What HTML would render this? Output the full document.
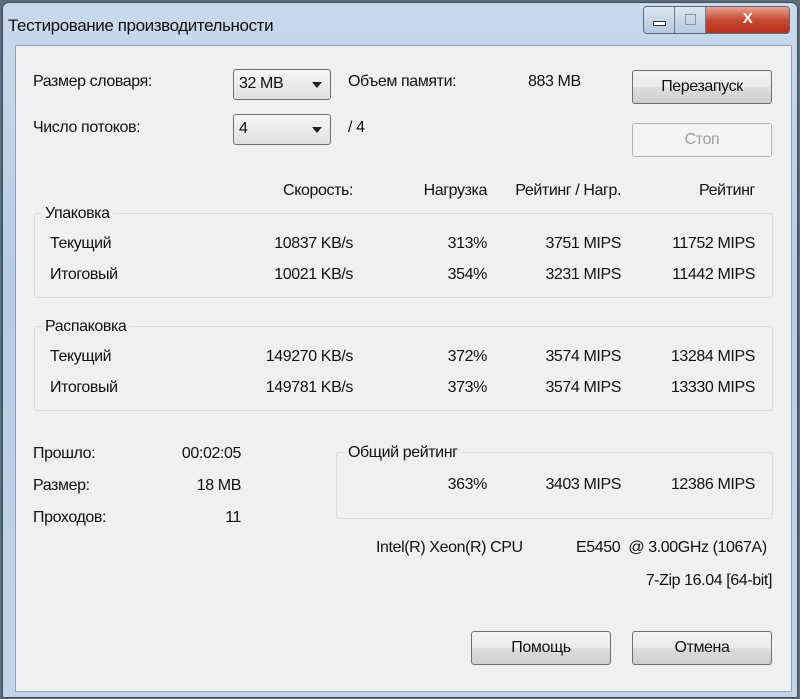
<!DOCTYPE html>
<html><head><meta charset="utf-8"><style>
body{margin:0;width:800px;height:699px;overflow:hidden;background:#5d6a78;font-family:"Liberation Sans",sans-serif;font-size:16px;letter-spacing:-0.4px;color:#111;position:relative}
.win{position:absolute;left:2px;top:2px;width:794px;height:694px;border:1px solid #3d4d5e;border-radius:7px 7px 2px 2px;background:linear-gradient(180deg,#c9daeb 0%,#b8cde3 40%,#c3d5e8 100%)}
.client{position:absolute;left:12px;top:42px;width:775px;height:645px;background:#f0f0f0;border:1px solid #8aa0b8}
.t{position:absolute;white-space:nowrap;line-height:20px}
.r{text-align:right}
.btn{position:absolute;border:1px solid #707070;border-radius:3px;background:linear-gradient(#f2f2f2 0%,#ebebeb 50%,#dddddd 51%,#cfcfcf 100%);text-align:center;line-height:31px;box-sizing:border-box}
.btn.dis{border-color:#adb2b5;background:#f4f4f4;color:#a0a0a0}
.combo{position:absolute;border:1px solid #707070;border-radius:3px;background:linear-gradient(#f6f6f6,#e0e0e0);box-sizing:border-box;line-height:28px;padding-left:5px}
.combo:after{content:"";position:absolute;right:8px;top:12px;border-left:5px solid transparent;border-right:5px solid transparent;border-top:6px solid #222}
.grp{position:absolute;border:1px solid #d5dfe5;border-radius:3px;box-sizing:border-box}
.gl{position:absolute;background:#f0f0f0;padding:0 3px;line-height:20px}
</style></head><body>
<div class="win">
<div class="t" style="left:5px;top:13px;font-size:17px">Тестирование производительности</div>
<div style="position:absolute;left:640px;top:3px;width:145px;height:26px;border:1px solid #5a6b7e;border-radius:4px;overflow:hidden;display:flex">
<div style="width:30px;background:linear-gradient(#dce7f2,#b6c9de);border-right:1px solid #6a7b8e;position:relative"><div style="position:absolute;left:9px;top:14px;width:11px;height:3px;border:1px solid #333;background:#fff"></div></div>
<div style="width:30px;background:linear-gradient(#dce7f2,#b6c9de);border-right:1px solid #6a7b8e;position:relative"><div style="position:absolute;left:10px;top:7px;width:9px;height:9px;border:1px solid #8899aa"></div></div>
<div style="flex:1;background:linear-gradient(#e8a290,#c74a33 50%,#b8301c);color:#fff;text-align:center;font-weight:bold;font-size:15px;line-height:24px">X</div>
</div>
<div class="client"></div>
</div>

<div class="t" style="left:33px;top:72px">Размер словаря:</div>
<div class="combo" style="left:233px;top:69px;width:98px;height:31px">32 MB</div>
<div class="t" style="left:348px;top:72px">Объем памяти:</div>
<div class="t" style="left:528px;top:72px">883 MB</div>
<div class="btn" style="left:632px;top:70px;width:140px;height:34px">Перезапуск</div>

<div class="t" style="left:33px;top:118px">Число потоков:</div>
<div class="combo" style="left:233px;top:114px;width:98px;height:31px">4</div>
<div class="t" style="left:348px;top:118px">/ 4</div>
<div class="btn dis" style="left:632px;top:123px;width:140px;height:34px">Стоп</div>

<div class="t r" style="left:200px;width:153px;top:181px">Скорость:</div>
<div class="t r" style="left:380px;width:107px;top:181px">Нагрузка</div>
<div class="t r" style="left:480px;width:141px;top:181px">Рейтинг / Нагр.</div>
<div class="t r" style="left:640px;width:115px;top:181px">Рейтинг</div>

<div class="grp" style="left:34px;top:213px;width:739px;height:85px"></div>
<div class="gl" style="left:42px;top:204px">Упаковка</div>
<div class="t" style="left:50px;top:234px">Текущий</div>
<div class="t r" style="left:200px;width:153px;top:234px">10837 KB/s</div>
<div class="t r" style="left:380px;width:107px;top:234px">313%</div>
<div class="t r" style="left:480px;width:141px;top:234px">3751 MIPS</div>
<div class="t r" style="left:640px;width:115px;top:234px">11752 MIPS</div>
<div class="t" style="left:50px;top:265px">Итоговый</div>
<div class="t r" style="left:200px;width:153px;top:265px">10021 KB/s</div>
<div class="t r" style="left:380px;width:107px;top:265px">354%</div>
<div class="t r" style="left:480px;width:141px;top:265px">3231 MIPS</div>
<div class="t r" style="left:640px;width:115px;top:265px">11442 MIPS</div>

<div class="grp" style="left:34px;top:326px;width:739px;height:85px"></div>
<div class="gl" style="left:42px;top:317px">Распаковка</div>
<div class="t" style="left:50px;top:347px">Текущий</div>
<div class="t r" style="left:200px;width:153px;top:347px">149270 KB/s</div>
<div class="t r" style="left:380px;width:107px;top:347px">372%</div>
<div class="t r" style="left:480px;width:141px;top:347px">3574 MIPS</div>
<div class="t r" style="left:640px;width:115px;top:347px">13284 MIPS</div>
<div class="t" style="left:50px;top:378px">Итоговый</div>
<div class="t r" style="left:200px;width:153px;top:378px">149781 KB/s</div>
<div class="t r" style="left:380px;width:107px;top:378px">373%</div>
<div class="t r" style="left:480px;width:141px;top:378px">3574 MIPS</div>
<div class="t r" style="left:640px;width:115px;top:378px">13330 MIPS</div>

<div class="t" style="left:33px;top:444px">Прошло:</div>
<div class="t r" style="left:150px;width:91px;top:444px">00:02:05</div>
<div class="t" style="left:33px;top:476px">Размер:</div>
<div class="t r" style="left:150px;width:91px;top:476px">18 MB</div>
<div class="t" style="left:33px;top:508px">Проходов:</div>
<div class="t r" style="left:150px;width:91px;top:508px">11</div>

<div class="grp" style="left:336px;top:452px;width:437px;height:67px"></div>
<div class="gl" style="left:345px;top:443px">Общий рейтинг</div>
<div class="t r" style="left:380px;width:107px;top:475px">363%</div>
<div class="t r" style="left:480px;width:141px;top:475px">3403 MIPS</div>
<div class="t r" style="left:640px;width:115px;top:475px">12386 MIPS</div>

<div class="t" style="left:376px;top:538px">Intel(R) Xeon(R) CPU</div>
<div class="t" style="left:576px;top:538px">E5450&nbsp; @ 3.00GHz (1067A)</div>
<div class="t r" style="left:560px;width:212px;top:571px">7-Zip 16.04 [64-bit]</div>

<div class="btn" style="left:471px;top:631px;width:140px;height:34px">Помощь</div>
<div class="btn" style="left:632px;top:631px;width:140px;height:34px">Отмена</div>
</body></html>
